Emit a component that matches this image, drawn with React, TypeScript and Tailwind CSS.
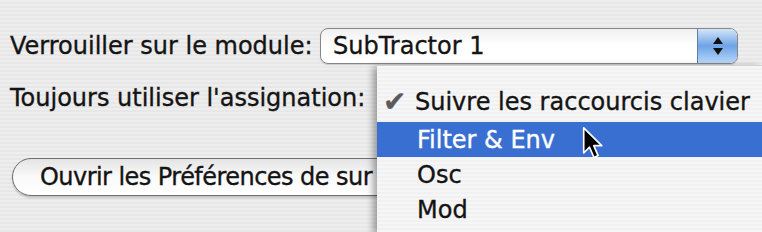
import React from "react";

function Cursor() {
  return (
    <svg width="26" height="36" viewBox="0 0 20 28" className="absolute left-[581px] top-[126px]">
      <path
        d="M2 1.5 L2 21 L6.5 16.5 L10 24.5 L13.2 23 L9.8 15.3 L16 15.3 Z"
        fill="#000"
        stroke="#fff"
        strokeWidth="1.3"
        strokeLinejoin="round"
      />
    </svg>
  );
}

function Stepper() {
  return (
    <div className="w-[40px] border-l border-[#5f7fa8] bg-gradient-to-b from-[#d3e5f8] via-[#6ea3e6] to-[#b7d8fa] flex flex-col items-center justify-center gap-[4px]">
      <svg width="10" height="7" viewBox="0 0 10 7">
        <path d="M5 0 L10 7 L0 7 Z" fill="#111" />
      </svg>
      <svg width="10" height="7" viewBox="0 0 10 7">
        <path d="M0 0 L10 0 L5 7 Z" fill="#111" />
      </svg>
    </div>
  );
}

export default function App() {
  return (
    <div className="relative w-[762px] h-[232px] overflow-hidden bg-[repeating-linear-gradient(180deg,#eeeeee_0px,#eeeeee_2px,#e7e7e7_2px,#e7e7e7_4px)] text-[#141414] font-['DejaVu_Sans',sans-serif] text-[24px] leading-[28px] [-webkit-text-stroke:0.35px_currentColor]">
      <div className="flex flex-col pt-[28px] pl-[10px]">
        <div className="flex items-center h-[36px]">
          <span className="w-[310px] whitespace-nowrap">Verrouiller sur le module:</span>
          <div className="w-[418px] h-[36px] rounded-[8px] border border-[#868686] bg-gradient-to-b from-[#f0f0f0] via-white to-white flex overflow-hidden shadow-[0_1px_1px_rgba(0,0,0,0.15)]">
            <span className="flex-1 pl-[12px] flex items-center">SubTractor 1</span>
            <Stepper />
          </div>
        </div>
        <div className="mt-[20px] h-[28px] whitespace-nowrap">Toujours utiliser l'assignation:</div>
        <div className="mt-[46px] ml-[2px] w-[440px] h-[38px] rounded-full border border-[#6e6e6e] bg-gradient-to-b from-[#e4e4e4] via-[#fafafa] to-white flex items-center pl-[27px] shadow-[0_2px_2px_rgba(0,0,0,0.18)]">
          <span className="whitespace-nowrap tracking-[-0.55px]">Ouvrir les Préférences de sur</span>
        </div>
      </div>

      <div className="absolute left-[377px] top-[65px] right-0 bottom-0 bg-[repeating-linear-gradient(180deg,#f6f6f6_0px,#f6f6f6_2px,#f1f1f1_2px,#f1f1f1_4px)] shadow-[-4px_2px_7px_rgba(0,0,0,0.35)] border-t border-[#d0d0d0] flex flex-col pt-[16px] whitespace-nowrap">
        <div className="flex items-center h-[40px]">
          <span className="w-[38px] pl-[6px] text-[#5a5a5a] text-[28px] leading-[28px]">✔</span>
          <span>Suivre les raccourcis clavier</span>
        </div>
        <div className="flex items-center h-[35px] pl-[40px] bg-[#3a6fd2] text-white">Filter &amp; Env</div>
        <div className="flex items-center h-[35px] pl-[40px]">Osc</div>
        <div className="flex items-center h-[35px] pl-[40px]">Mod</div>
      </div>

      <Cursor />
    </div>
  );
}
